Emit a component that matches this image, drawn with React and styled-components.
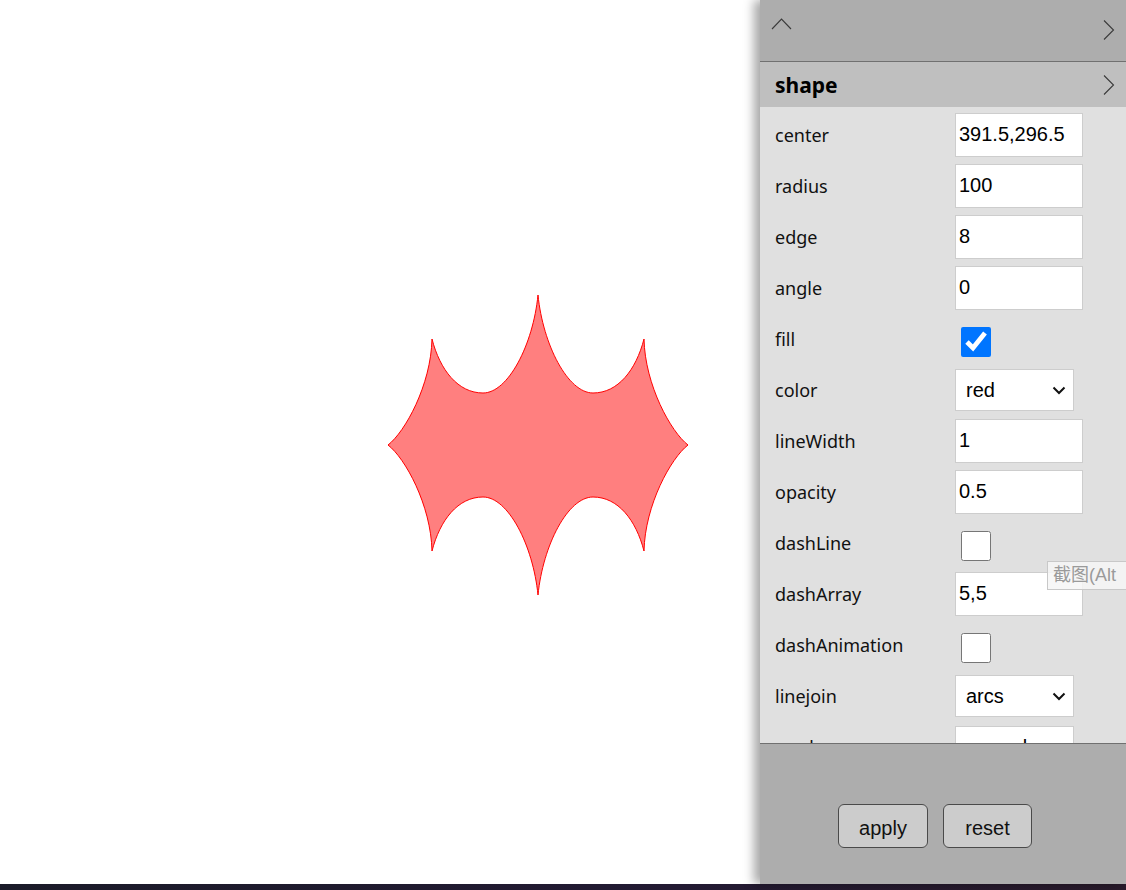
import React from 'react';
import styled, { createGlobalStyle } from 'styled-components';

const GlobalStyle = createGlobalStyle`
  html, body {
    margin: 0;
    padding: 0;
    background: #ffffff;
    overflow: hidden;
  }
  body {
    font-family: 'Noto Sans', 'Liberation Sans', sans-serif;
  }
`;

/* page layout */
const Page = styled.div`
  display: flex;
  flex-direction: column;
  width: 1126px;
  height: 890px;
`;

const Main = styled.div`
  display: flex;
  flex-direction: row;
  height: 884px;
  position: relative;
`;

const Taskbar = styled.div`
  height: 6px;
  background: linear-gradient(to right, #1b1b29, #231a33 60%, #2a1b2c);
`;

const Stage = styled.div`
  flex: 1;
  background: #ffffff;
`;

/* side panel */
const Panel = styled.div`
  width: 366px;
  display: flex;
  flex-direction: column;
  box-shadow: -6px 0 10px rgba(0, 0, 0, 0.35);
  z-index: 1;
`;

const TopBar = styled.div`
  height: 61px;
  background: #adadad;
  border-bottom: 1px solid #707070;
  display: flex;
  justify-content: space-between;
  align-items: flex-start;
  padding: 0 6px 0 11px;
`;

const SectionHead = styled.div`
  height: 45px;
  background: #bfbfbf;
  display: flex;
  justify-content: space-between;
  align-items: center;
  padding: 0 6px 0 15px;
`;

const SectionTitle = styled.span`
  font-size: 21px;
  font-weight: 700;
  color: #000;
`;

const Content = styled.div`
  flex: 1;
  background: #e0e0e0;
  padding-top: 2px;
  overflow: hidden;
`;

const Row = styled.div`
  display: flex;
  align-items: center;
  height: 51px;
  padding-left: 15px;
`;

const Label = styled.span`
  width: 180px;
  font-size: 18px;
  color: #111;
`;

const TextBox = styled.input`
  box-sizing: border-box;
  width: 128px;
  height: 44px;
  border: 1px solid #cdcdcd;
  background: #fff;
  padding: 0 3px;
  font-family: 'Liberation Sans', Arial, sans-serif;
  font-size: 20px;
  color: #000;
  outline: none;
`;

const Check = styled.input`
  width: 30px;
  height: 30px;
  margin: 6px 0 0 6px;
`;

const SelectWrap = styled.div`
  position: relative;
  width: 119px;
  height: 42px;
`;

const Select = styled.select`
  appearance: none;
  box-sizing: border-box;
  width: 119px;
  height: 42px;
  border: 1px solid #cdcdcd;
  border-radius: 0;
  background: #fff;
  padding: 0 10px;
  font-family: 'Liberation Sans', Arial, sans-serif;
  font-size: 20px;
  color: #000;
  outline: none;
`;

const SelectArrow = styled.svg`
  position: absolute;
  right: 8px;
  top: 17px;
  pointer-events: none;
`;

const Footer = styled.div`
  height: 141px;
  background: #adadad;
  border-top: 1px solid #707070;
  display: flex;
  justify-content: center;
  align-items: flex-start;
  gap: 15px;
  padding: 60px 16px 0 0;
  box-sizing: border-box;
`;

const Button = styled.button`
  width: ${p => p.$w}px;
  height: 44px;
  background: #cccccc;
  border: 1px solid #4a4a4a;
  border-radius: 6px;
  font-family: 'Liberation Sans', Arial, sans-serif;
  font-size: 20px;
  color: #111;
  padding: 4px 0 0;
`;

const Tip = styled.div`
  position: absolute;
  left: 1047px;
  right: 0;
  top: 561px;
  height: 27px;
  padding: 0 0 0 5px;
  background: rgba(246, 246, 246, 0.85);
  border: 1px solid #c8c8c8;
  border-right: none;
  color: #9a9a9a;
  font-family: 'Liberation Sans', 'Noto Sans CJK SC', sans-serif;
  font-size: 18px;
  line-height: 27px;
  white-space: nowrap;
  z-index: 2;
`;

const Chevron = ({ dir, top }) => (
  <svg width="22" height="22" viewBox="0 0 22 22" style={{ marginTop: top }}>
    {dir === 'up' ? (
      <polyline points="1,11 10.5,1 20,11" fill="none" stroke="#3a3a3a" strokeWidth="1.1" />
    ) : (
      <polyline points="6,1.5 15.5,11 6,20.5" fill="none" stroke="#3a3a3a" strokeWidth="1.1" />
    )}
  </svg>
);

const shapePath =
  'M388,445 C405,432 431,385 432,339 C440,370 458,393 483,393 C508,393 533,345 538,295 ' +
  'C543,345 568,393 593,393 C618,393 636,370 644,339 C645,385 671,432 688,445 ' +
  'C671,458 645,505 644,551 C636,520 618,497 593,497 C568,497 543,545 538,595 ' +
  'C533,545 508,497 483,497 C458,497 440,520 432,551 C431,505 405,458 388,445 Z';

const fields = [
  { name: 'center', type: 'text', value: '391.5,296.5' },
  { name: 'radius', type: 'text', value: '100' },
  { name: 'edge', type: 'text', value: '8' },
  { name: 'angle', type: 'text', value: '0' },
  { name: 'fill', type: 'check', value: true },
  { name: 'color', type: 'select', value: 'red' },
  { name: 'lineWidth', type: 'text', value: '1' },
  { name: 'opacity', type: 'text', value: '0.5' },
  { name: 'dashLine', type: 'check', value: false },
  { name: 'dashArray', type: 'text', value: '5,5' },
  { name: 'dashAnimation', type: 'check', value: false },
  { name: 'linejoin', type: 'select', value: 'arcs' },
  { name: 'mode', type: 'select', value: 'normal' },
];

const App = () => {
  return (
    <Page>
      <GlobalStyle />
      <Main>
        <Stage>
          <svg width="760" height="884">
            <path d={shapePath} fill="rgba(255,0,0,0.5)" stroke="#ff0000" strokeWidth="1" />
          </svg>
        </Stage>
        <Panel>
          <TopBar>
            <Chevron dir="up" top={18} />
            <Chevron dir="right" top={19} />
          </TopBar>
          <SectionHead>
            <SectionTitle>shape</SectionTitle>
            <Chevron dir="right" />
          </SectionHead>
          <Content>
            {fields.map(f => (
              <Row key={f.name}>
                <Label>{f.name}</Label>
                {f.type === 'text' && <TextBox defaultValue={f.value} />}
                {f.type === 'check' && <Check type="checkbox" defaultChecked={f.value} />}
                {f.type === 'select' && (
                  <SelectWrap>
                    <Select defaultValue={f.value}>
                      <option>{f.value}</option>
                    </Select>
                    <SelectArrow width="14" height="9" viewBox="0 0 14 9">
                      <polyline points="1.5,1.5 7,7 12.5,1.5" fill="none" stroke="#111" strokeWidth="2" />
                    </SelectArrow>
                  </SelectWrap>
                )}
              </Row>
            ))}
          </Content>
          <Footer>
            <Button $w={90}>apply</Button>
            <Button $w={89}>reset</Button>
          </Footer>
        </Panel>
        <Tip>截图(Alt</Tip>
      </Main>
      <Taskbar />
    </Page>
  );
};

export default App;
